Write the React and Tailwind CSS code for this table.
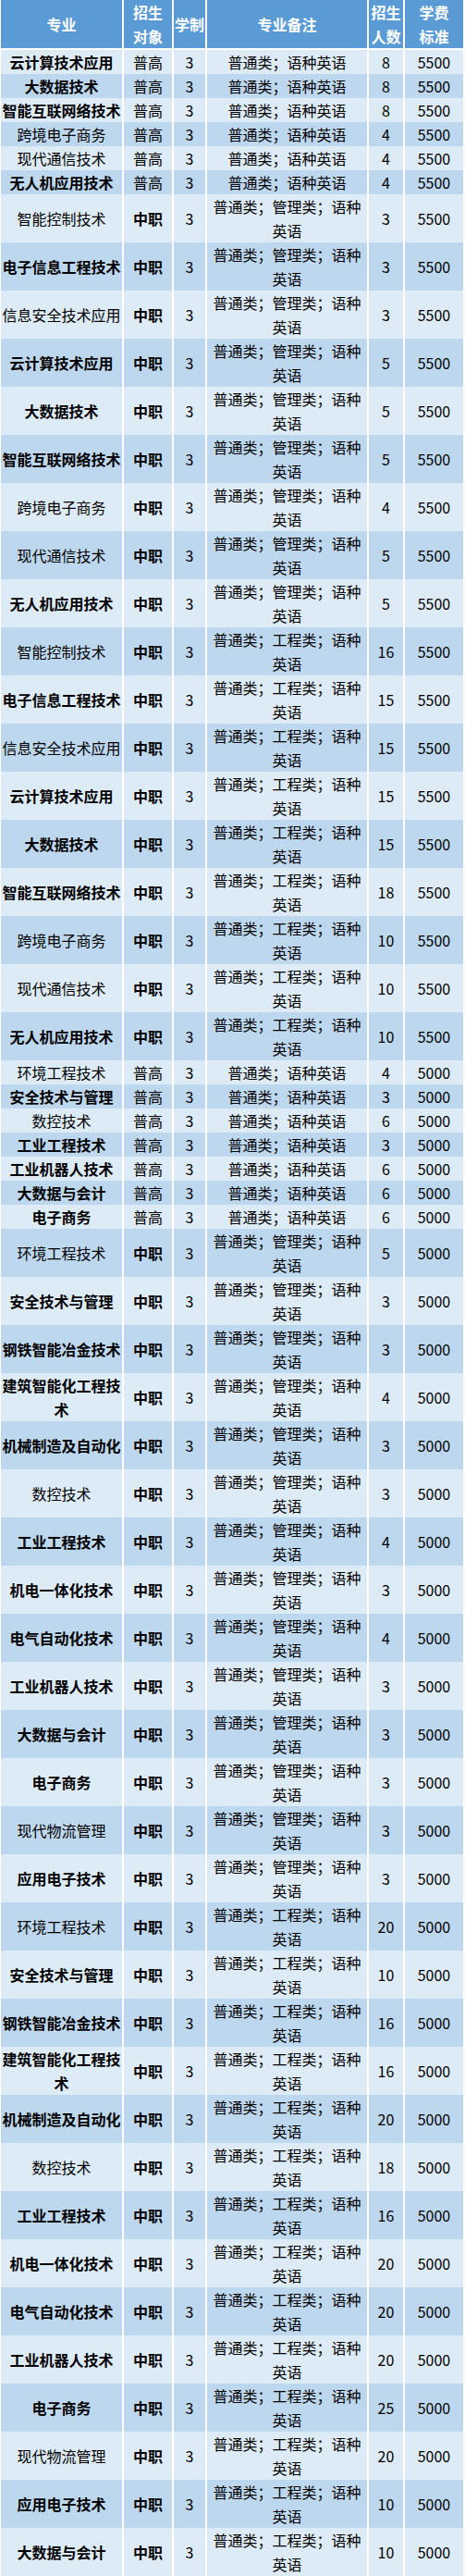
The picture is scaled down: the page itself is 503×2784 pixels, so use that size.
import React from "react";

const G = "普通类；语种英语";
const M = "普通类；管理类；语种英语";
const E = "普通类；工程类；语种英语";

// [name, type, note, count, fee, bold]
const rows = [
  ["云计算技术应用", "普高", G, 8, 5500, 1],
  ["大数据技术", "普高", G, 8, 5500, 1],
  ["智能互联网络技术", "普高", G, 8, 5500, 1],
  ["跨境电子商务", "普高", G, 4, 5500, 0],
  ["现代通信技术", "普高", G, 4, 5500, 0],
  ["无人机应用技术", "普高", G, 4, 5500, 1],
  ["智能控制技术", "中职", M, 3, 5500, 0],
  ["电子信息工程技术", "中职", M, 3, 5500, 1],
  ["信息安全技术应用", "中职", M, 3, 5500, 0],
  ["云计算技术应用", "中职", M, 5, 5500, 1],
  ["大数据技术", "中职", M, 5, 5500, 1],
  ["智能互联网络技术", "中职", M, 5, 5500, 1],
  ["跨境电子商务", "中职", M, 4, 5500, 0],
  ["现代通信技术", "中职", M, 5, 5500, 0],
  ["无人机应用技术", "中职", M, 5, 5500, 1],
  ["智能控制技术", "中职", E, 16, 5500, 0],
  ["电子信息工程技术", "中职", E, 15, 5500, 1],
  ["信息安全技术应用", "中职", E, 15, 5500, 0],
  ["云计算技术应用", "中职", E, 15, 5500, 1],
  ["大数据技术", "中职", E, 15, 5500, 1],
  ["智能互联网络技术", "中职", E, 18, 5500, 1],
  ["跨境电子商务", "中职", E, 10, 5500, 0],
  ["现代通信技术", "中职", E, 10, 5500, 0],
  ["无人机应用技术", "中职", E, 10, 5500, 1],
  ["环境工程技术", "普高", G, 4, 5000, 0],
  ["安全技术与管理", "普高", G, 3, 5000, 1],
  ["数控技术", "普高", G, 6, 5000, 0],
  ["工业工程技术", "普高", G, 3, 5000, 1],
  ["工业机器人技术", "普高", G, 6, 5000, 1],
  ["大数据与会计", "普高", G, 6, 5000, 1],
  ["电子商务", "普高", G, 6, 5000, 1],
  ["环境工程技术", "中职", M, 5, 5000, 0],
  ["安全技术与管理", "中职", M, 3, 5000, 1],
  ["钢铁智能冶金技术", "中职", M, 3, 5000, 1],
  ["建筑智能化工程技术", "中职", M, 4, 5000, 1],
  ["机械制造及自动化", "中职", M, 3, 5000, 1],
  ["数控技术", "中职", M, 3, 5000, 0],
  ["工业工程技术", "中职", M, 4, 5000, 1],
  ["机电一体化技术", "中职", M, 3, 5000, 1],
  ["电气自动化技术", "中职", M, 4, 5000, 1],
  ["工业机器人技术", "中职", M, 3, 5000, 1],
  ["大数据与会计", "中职", M, 3, 5000, 1],
  ["电子商务", "中职", M, 3, 5000, 1],
  ["现代物流管理", "中职", M, 3, 5000, 0],
  ["应用电子技术", "中职", M, 3, 5000, 1],
  ["环境工程技术", "中职", E, 20, 5000, 0],
  ["安全技术与管理", "中职", E, 10, 5000, 1],
  ["钢铁智能冶金技术", "中职", E, 16, 5000, 1],
  ["建筑智能化工程技术", "中职", E, 16, 5000, 1],
  ["机械制造及自动化", "中职", E, 20, 5000, 1],
  ["数控技术", "中职", E, 18, 5000, 0],
  ["工业工程技术", "中职", E, 16, 5000, 1],
  ["机电一体化技术", "中职", E, 20, 5000, 1],
  ["电气自动化技术", "中职", E, 20, 5000, 1],
  ["工业机器人技术", "中职", E, 20, 5000, 1],
  ["电子商务", "中职", E, 25, 5000, 1],
  ["现代物流管理", "中职", E, 20, 5000, 0],
  ["应用电子技术", "中职", E, 10, 5000, 1],
  ["大数据与会计", "中职", E, 10, 5000, 1],
];

const gridCls =
  "grid grid-cols-[131px_52px_34px_173px_37px_63px] gap-x-[2px] pl-[1px] pr-[2px]";
const cellCls = "flex items-center justify-center text-center leading-[26px]";

export default function App() {
  return (
    <div
      className="w-[503px] bg-white text-[16px] text-black"
      style={{ fontFamily: '"Noto Sans CJK SC", "Noto Sans", sans-serif' }}
    >
      <div className="flex flex-col gap-y-[2px] pb-[2px]">
        <div className={`${gridCls} h-[52px]`}>
          {[
            <>专业</>,
            <>招生<br />对象</>,
            <>学制</>,
            <>专业备注</>,
            <>招生<br />人数</>,
            <>学费<br />标准</>,
          ].map((c, i) => (
            <div
              key={i}
              className={`${cellCls} bg-[#5b9bd5] font-bold text-white`}
            >
              <div>{c}</div>
            </div>
          ))}
        </div>
        {rows.map(([name, type, note, count, fee, bold], i) => {
          const bg = i % 2 === 0 ? "bg-[#ddebf7]" : "bg-[#bdd7ee]";
          const h = type === "普高" ? "h-[24px]" : "h-[50px]";
          return (
            <div key={i} className={`${gridCls} ${h}`}>
              <div className={`${cellCls} ${bg} ${bold ? "font-bold" : "font-normal"}`}>
                <div>{name}</div>
              </div>
              <div className={`${cellCls} ${bg} ${type === "中职" ? "font-bold" : "font-normal"}`}>
                <div>{type}</div>
              </div>
              <div className={`${cellCls} ${bg}`}>
                <div>3</div>
              </div>
              <div className={`${cellCls} ${bg}`}>
                <div>{note}</div>
              </div>
              <div className={`${cellCls} ${bg}`}>
                <div>{count}</div>
              </div>
              <div className={`${cellCls} ${bg}`}>
                <div>{fee}</div>
              </div>
            </div>
          );
        })}
      </div>
    </div>
  );
}
